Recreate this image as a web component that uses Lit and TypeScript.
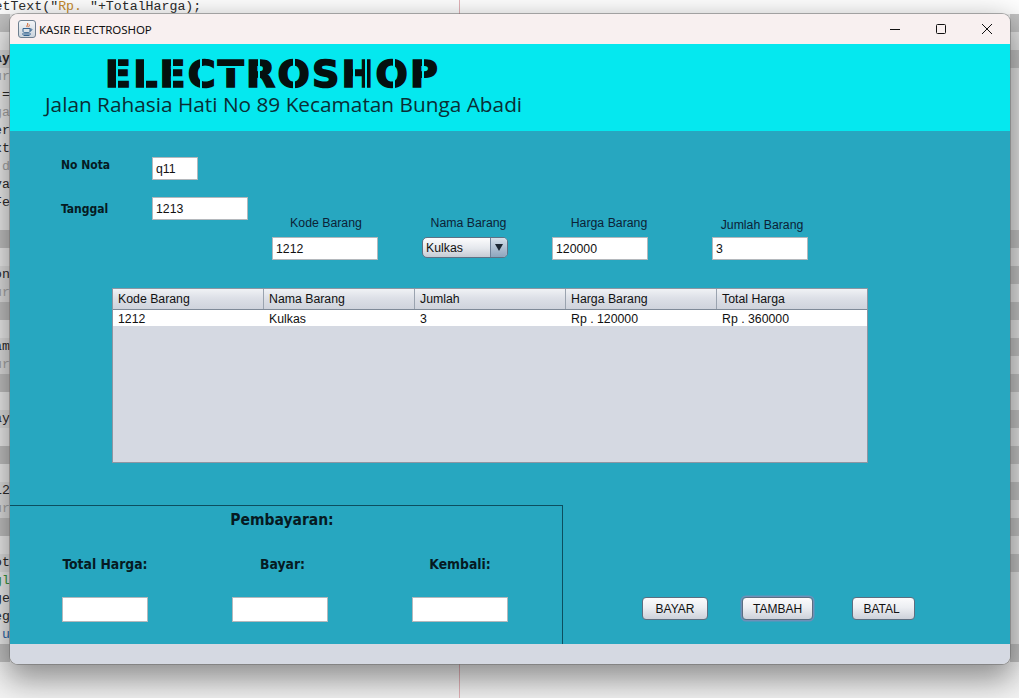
import { LitElement, html, css } from "lit";
import { customElement } from "lit/decorators.js";

const LEFT: [string, string][] = [
  ["", "band"], ["", ""],
  ["ay", "bold band-soft"], ["ur", "dim"], ["=", ""], ["ga", "dim"], ["er", ""], ["xt", ""], ["d", "dim"], ["va", ""], ["Fe", ""],
  ["", ""], ["", "band"], ["", ""], ["on", "soft"], ["ur", "dim soft"], ["", "band"], ["", ""], ["am", "soft"], ["ur", "dim soft"],
  ["", "band"], ["", ""], ["ay", "soft"], ["", ""], ["", "band"], ["", ""], ["12", "soft"], ["ur", "dim soft"], ["", "band"], ["", ""],
  ["ot", "soft"], ["gl", "green"], ["ge", ""], ["eg", ""], ["u", "blue"], ["", "band"],
];
const RIGHT_BANDS = new Set([0, 2, 12, 14, 16, 18, 20, 22, 24, 26, 28, 30, 35]);
const COLS = ["Kode Barang", "Nama Barang", "Jumlah", "Harga Barang", "Total Harga"];
const ROW = ["1212", "Kulkas", "3", "Rp . 120000", "Rp . 360000"];

@customElement("app-root")
export class AppRoot extends LitElement {
  static styles = css`
    :host { display: block; width: 1019px; height: 698px; font-family: "Liberation Sans", Arial, sans-serif; }
    .stage { position: relative; width: 1019px; height: 698px; overflow: hidden; background: #fff; }
    .backdrop { position: absolute; inset: 0; display: flex; flex-direction: column; background: #f6f6f6; }
    .topline { height: 14px; background: #fff; font: 13.25px/14px "Liberation Mono", monospace; color: #2b2b2b; white-space: pre; flex: none; text-indent: -5.5px; }
    .topline b { font-weight: 400; color: #c68a2e; }
    .sides { display: flex; justify-content: space-between; flex: 1; background: linear-gradient(#ededed, #f4f4f4); }
    .left, .right { display: flex; flex-direction: column; }
    .left { width: 10px; }
    .right { width: 9px; }
    .ln { height: 18px; flex: none; background: #e6e6e6; display: flex; justify-content: flex-end; overflow: hidden; font: 13.25px/18px "Liberation Mono", monospace; color: #2b2b2b; white-space: pre; }
    .left .ln { background: #f1f1f1; }
    .left .ln.band, .right .ln.band { background: #c4c4c4; }
    .left .ln.soft { background: #e3e3e3; }
    .left .ln.band-soft { background: #dedede; }
    .ln.dim { color: #a8a8a8; }
    .ln.green { color: #3a9a3a; }
    .ln.blue { color: #2a6ab0; }
    .ln.bold { font-weight: 700; }
    .redline { position: absolute; left: 459px; top: 0; bottom: 0; width: 1px; background: #e3b3b8; }

    .window { position: absolute; left: 10px; top: 14px; width: 1000px; height: 650px; border-radius: 8px; overflow: hidden; display: flex; flex-direction: column; }
    .shadow { position: absolute; left: 10px; top: 14px; width: 1000px; height: 650px; border-radius: 8px; box-shadow: 0 0 0 1px rgba(110,110,110,.55), 0 12px 32px 4px rgba(0,0,0,.42); }

    .titlebar { height: 30px; flex: none; background: #f8f0f0; display: flex; align-items: center; padding-left: 8px; color: #111; }
    .appicon { width: 18px; height: 18px; flex: none; }
    .titletext { margin-left: 3px; font: 11.5px "Noto Sans", "Open Sans", sans-serif; letter-spacing: -.09px; flex: 1; }
    .ctrl { width: 46px; height: 30px; display: flex; align-items: center; justify-content: center; }
    .ctrl svg { display: block; width: 12px; height: 12px; stroke: #111; fill: none; stroke-width: 1; }

    .banner { height: 87px; flex: none; background: #05e8ef; display: flex; flex-direction: column; }
    .brand { position: relative; margin: 12px 0 0 95px; height: 36px; width: 344px; line-height: 36px; font-family: "DejaVu Sans", sans-serif; font-weight: 700; font-size: 38px; letter-spacing: 2.2px; color: #05100f; -webkit-text-stroke: 1.6px #05100f; white-space: nowrap; }
    .brand::after { content: ""; position: absolute; inset: 0;
      background-image:
        linear-gradient(#05e8ef, #05e8ef),
        linear-gradient(90deg,
          transparent 0 11px, #05e8ef 11px 13px, transparent 13px 39px, #05e8ef 39px 41px, transparent 41px 66px, #05e8ef 66px 68px, transparent 68px 95px, #05e8ef 95px 97px, transparent 97px 153px, #05e8ef 153px 155px, transparent 155px 188px, #05e8ef 188px 190px, transparent 190px 248px, #05e8ef 248px 250px, transparent 250px 260px, #05e8ef 260px 262px, transparent 262px 288px, #05e8ef 288px 290px, transparent 290px 317px, #05e8ef 317px 319px, transparent 319px 344px);
      background-size: 28px 2px, 100% 100%; background-position: 113px 10px, 0 0; background-repeat: no-repeat; }
    .addr { margin: 0 0 0 35px; font: 20.8px/24px "Open Sans", sans-serif; color: #0a2e35; white-space: nowrap; }

    .main { flex: 1; min-height: 0; background: #27a7c0; display: flex; flex-direction: column; }
    .head { height: 129px; flex: none; display: flex; margin-bottom: 28px; }
    .meta { width: 262px; flex: none; padding: 26px 0 0 51px; box-sizing: border-box; display: flex; flex-direction: column; gap: 17px; }
    .pair { display: flex; align-items: flex-start; }
    .hand { font-family: "DejaVu Sans Condensed", "DejaVu Sans", sans-serif; font-weight: 700; color: #061a22; }
    .pair .hand { width: 91px; font-size: 12px; line-height: 14px; padding-top: 1px; }
    .pair .hand.low { padding-top: 5px; }
    .fields { display: flex; align-items: flex-end; }
    .field { display: flex; flex-direction: column; }
    .field .lab { font-size: 12.3px; line-height: 14px; color: #0c2236; margin-bottom: 7px; white-space: nowrap; text-align: center; }
    .field.f1 { width: 106px; margin-right: 44px; }
    .field.f2 { width: 86px; margin-right: 44px; }
    .field.f3 { width: 96px; margin-right: 64px; }
    .field.f4 { width: 96px; }
    .f1 .lab { margin-left: 2px; }
    .f2 .lab { margin-left: 5px; margin-right: -2px; }
    .f3 .lab { margin-left: 18px; }
    .f4 .lab { margin-left: 8px; margin-right: 4px; margin-bottom: 5px; }
    input { display: block; box-sizing: border-box; height: 23px; border: 1px solid #b4b8bc; background: #fff; padding: 0 3px; margin: 0; font: 12.3px "Liberation Sans", Arial, sans-serif; color: #111; outline: none; border-radius: 0; }
    .w46 { width: 46px; }
    .w96 { width: 96px; }
    .w106 { width: 106px; }
    .combo { width: 86px; height: 21px; margin-bottom: 2px; box-sizing: border-box; border: 1px solid #5f7184; border-radius: 5px; background: linear-gradient(#fcfcfd, #e4e7ec 55%, #c6cbd4); display: flex; align-items: center; overflow: hidden; font-size: 12.3px; color: #111; padding-left: 3px; }
    .combo span { flex: 1; }
    .arrow { width: 16px; height: 100%; flex: none; border-left: 1px solid #6d8097; background: linear-gradient(#d6e0ea, #b0c1d3 50%, #8ea5bd); display: flex; align-items: center; justify-content: center; }
    .arrow i { display: block; width: 0; height: 0; border-left: 4px solid transparent; border-right: 4px solid transparent; border-top: 7px solid #1c2733; }

    .table { margin-left: 102px; width: 756px; height: 175px; flex: none; box-sizing: border-box; border: 1px solid #8d96a3; background: #d5d9e2; display: flex; flex-direction: column; }
    .thead { display: grid; grid-template-columns: repeat(5, 151px); height: 21px; flex: none; background: linear-gradient(#f0f2f5, #dde0e7 45%, #cfd3dc); border-bottom: 1px solid #7f8a98; box-sizing: border-box; }
    .thead div { font-size: 12.3px; line-height: 20px; padding-left: 5px; color: #111; border-right: 1px solid #9aa3af; box-sizing: border-box; }
    .thead div:last-child { border-right: 0; }
    .tr { display: grid; grid-template-columns: repeat(5, 151px); height: 16px; flex: none; background: #fff; }
    .tr div { font-size: 12.3px; line-height: 18px; padding-left: 5px; color: #111; }

    .bottom { margin-top: 42px; display: flex; height: 139px; flex: none; }
    .pay { width: 553px; box-sizing: border-box; flex: none; border-top: 1px solid #0c4f60; border-right: 1px solid #0c4f60; padding-top: 4px; display: flex; flex-direction: column; }
    .pay-title { font-size: 15.5px; line-height: 20px; text-align: center; margin-right: 8px; }
    .pay-grid { display: grid; grid-template-columns: 86px 96px 96px; column-gap: 84px; margin: 0 0 0 52px; }
    .pay-col { display: flex; flex-direction: column; align-items: center; }
    .pay-col .hand { font-size: 13.8px; line-height: 18px; margin: 25px 0 24px; white-space: nowrap; }
    .pay-col:nth-child(2) .hand { margin-left: 5px; }
    .pay-col input { height: 25px; width: 100%; }
    .btns { display: flex; align-items: flex-start; padding: 92px 0 0 79px; }
    .btn { box-sizing: border-box; height: 23px; border: 1px solid #5d6e80; border-radius: 4px; background: linear-gradient(#fbfbfc, #eceef2 45%, #cdd1da); font: 12px/22px "Liberation Sans", Arial, sans-serif; color: #111; text-align: center; }
    .b1 { width: 66px; margin-right: 34px; }
    .b2 { width: 71px; margin-right: 39px; box-shadow: 0 0 0 1.5px #6f8fb8; }
    .b3 { width: 63px; padding-right: 4px; }
    .footer { height: 20px; flex: none; background: #d5d9e2; }
  `;

  private appIcon() {
    return html`<svg class="appicon" viewBox="0 0 18 18">
      <defs><linearGradient id="ig" x1="0" y1="0" x2="0" y2="1"><stop offset="0" stop-color="#f4f6f8"/><stop offset="1" stop-color="#c9d3dc"/></linearGradient></defs>
      <rect x=".5" y=".5" width="17" height="17" rx="2.5" fill="url(#ig)" stroke="#6d7f90"/>
      <path d="M9.5 3c1.5 1.5-1.6 2.4-.4 4.2M11.3 4.6c.6 1-1 1.5-.5 2.6" fill="none" stroke="#d2622a" stroke-width="1"/>
      <path d="M5 8.5h7v2.6c0 1-1 1.6-2 1.6H7c-1 0-2-.6-2-1.6zM12 9h1.4c.8 0 .8 2-1.4 2" fill="none" stroke="#33638f" stroke-width="1"/>
      <path d="M4 14h9M5.5 15.5h6" stroke="#33638f" stroke-width="1" fill="none"/>
    </svg>`;
  }

  render() {
    return html`<div class="stage">
      <div class="backdrop">
        <div class="topline">etText("<b>Rp. </b>"+TotalHarga);</div>
        <div class="sides">
          <div class="left">${LEFT.map(([t, c]) => html`<div class="ln ${c}">${t}</div>`)}</div>
          <div class="right">${Array.from({ length: 36 }, (_, i) => html`<div class="ln ${RIGHT_BANDS.has(i) ? "band" : ""}"></div>`)}</div>
        </div>
      </div>
      <div class="redline"></div>
      <div class="shadow"></div>
      <div class="window">
        <div class="titlebar">
          ${this.appIcon()}
          <div class="titletext">KASIR ELECTROSHOP</div>
          <div class="ctrl"><svg viewBox="0 0 12 12"><path d="M1 6.5h10"/></svg></div>
          <div class="ctrl"><svg viewBox="0 0 12 12"><rect x="1.5" y="1.5" width="9" height="9" rx="1"/></svg></div>
          <div class="ctrl"><svg viewBox="0 0 12 12"><path d="M1 1l10 10M11 1L1 11"/></svg></div>
        </div>
        <div class="banner">
          <div class="brand">ELECTROSHOP</div>
          <div class="addr">Jalan Rahasia Hati No 89 Kecamatan Bunga Abadi</div>
        </div>
        <div class="main">
          <div class="head">
            <div class="meta">
              <div class="pair"><div class="hand">No Nota</div><input class="w46" .value=${"q11"} /></div>
              <div class="pair"><div class="hand low">Tanggal</div><input class="w96" .value=${"1213"} /></div>
            </div>
            <div class="fields">
              <div class="field f1"><div class="lab">Kode Barang</div><input class="w106" .value=${"1212"} /></div>
              <div class="field f2"><div class="lab">Nama Barang</div><div class="combo"><span>Kulkas</span><div class="arrow"><i></i></div></div></div>
              <div class="field f3"><div class="lab">Harga Barang</div><input class="w96" .value=${"120000"} /></div>
              <div class="field f4"><div class="lab">Jumlah Barang</div><input class="w96" .value=${"3"} /></div>
            </div>
          </div>
          <div class="table">
            <div class="thead">${COLS.map((c) => html`<div>${c}</div>`)}</div>
            <div class="tr">${ROW.map((c) => html`<div>${c}</div>`)}</div>
          </div>
          <div class="bottom">
            <div class="pay">
              <div class="pay-title hand">Pembayaran:</div>
              <div class="pay-grid">
                <div class="pay-col"><div class="hand">Total Harga:</div><input /></div>
                <div class="pay-col"><div class="hand">Bayar:</div><input /></div>
                <div class="pay-col"><div class="hand">Kembali:</div><input /></div>
              </div>
            </div>
            <div class="btns">
              <div class="btn b1">BAYAR</div>
              <div class="btn b2">TAMBAH</div>
              <div class="btn b3">BATAL</div>
            </div>
          </div>
        </div>
        <div class="footer"></div>
      </div>
    </div>`;
  }
}
